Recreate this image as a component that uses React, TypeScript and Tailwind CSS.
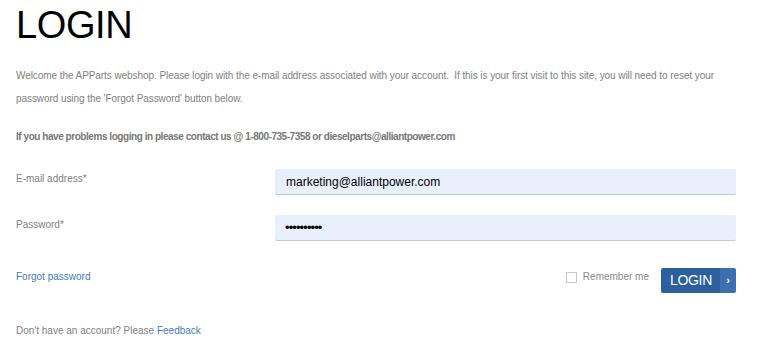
import React from 'react';

export default function App() {
  const font = { fontFamily: '"Liberation Sans", Arial, sans-serif' };
  return (
    <div className="w-[757px] h-[353px] bg-white pl-4 pr-[21px] overflow-hidden" style={font}>
      <h1 className="text-[38px] leading-[40px] pt-[5px] text-black font-normal tracking-[-0.4px]">LOGIN</h1>

      <p className="mt-[19px] text-[10px] leading-[23px] text-[#808080] tracking-[-0.07px]">
        Welcome the APParts webshop. Please login with the e-mail address associated with your account.&nbsp; If this is your first visit to this site, you will need to reset your password using the 'Forgot Password' button below.
      </p>

      <p className="mt-[20px] text-[10px] leading-[14px] font-bold text-[#777] tracking-[-0.45px]">
        If you have problems logging in please contact us @ 1-800-735-7358 or dieselparts@alliantpower.com
      </p>

      <div className="mt-[25px] flex flex-col gap-[20px]">
        <div className="flex items-center">
          <label className="w-[259px] text-[10px] text-[#808080] -mt-[7px]">E-mail address*</label>
          <div className="flex-1 h-[26px] bg-[#e8f0fe] rounded-[2px] border-b border-[#c4c8cf] flex items-center px-[11px] text-[12px] text-black">
            marketing@alliantpower.com
          </div>
        </div>
        <div className="flex items-center">
          <label className="w-[259px] text-[10px] text-[#808080] -mt-[7px]">Password*</label>
          <div className="flex-1 h-[26px] bg-[#e8f0fe] rounded-[2px] border-b border-[#c4c8cf] flex items-center px-[10px] text-[13px] text-black tracking-[-0.9px]">
            ••••••••••
          </div>
        </div>
      </div>

      <div className="mt-[27px] flex items-center">
        <a className="text-[10px] text-[#4a78bd] flex-1 -mt-[8px]">Forgot password</a>
        <div className="flex items-center mr-[12px] -mt-[7px]">
          <span className="w-[11px] h-[11px] border border-[#c8c8c8] bg-white"></span>
          <span className="ml-[6px] text-[10px] text-[#888] -mt-[2px]">Remember me</span>
        </div>
        <button className="h-[25px] w-[75px] flex rounded-[2px] overflow-hidden text-white">
          <span className="flex-1 bg-[#2b5f9e] flex items-center justify-center text-[14px] tracking-[-0.3px] pl-[1px]">LOGIN</span>
          <span className="w-[16px] bg-[#3c70ae] flex items-center justify-center text-[11px] font-bold">›</span>
        </button>
      </div>

      <p className="mt-[30px] text-[10px] text-[#808080]">
        Don't have an account? Please <a className="text-[#4a78bd]">Feedback</a>
      </p>
    </div>
  );
}
